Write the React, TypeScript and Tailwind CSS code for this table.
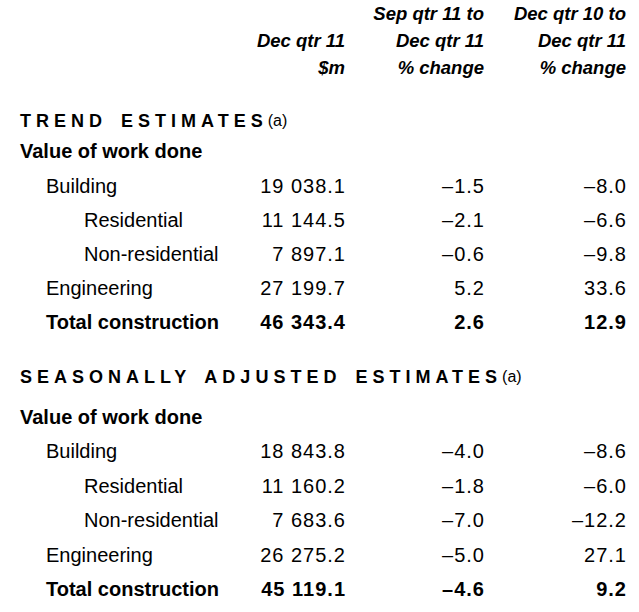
const font = { fontFamily: '"Liberation Sans", Arial, sans-serif' }

type Row = {
  label:  string
  indent: 0 | 1 | 2
  total?: boolean
  level:  string
  qtr:    string
  year:   string
}

const trend: Row[] = [
  { label: 'Building',           indent: 1, level: '19 038.1', qtr: '–1.5', year: '–8.0' },
  { label: 'Residential',        indent: 2, level: '11 144.5', qtr: '–2.1', year: '–6.6' },
  { label: 'Non-residential',    indent: 2, level: '7 897.1',  qtr: '–0.6', year: '–9.8' },
  { label: 'Engineering',        indent: 1, level: '27 199.7', qtr: '5.2',  year: '33.6' },
  { label: 'Total construction', indent: 1, total: true, level: '46 343.4', qtr: '2.6', year: '12.9' },
]

const seasonal: Row[] = [
  { label: 'Building',           indent: 1, level: '18 843.8', qtr: '–4.0', year: '–8.6' },
  { label: 'Residential',        indent: 2, level: '11 160.2', qtr: '–1.8', year: '–6.0' },
  { label: 'Non-residential',    indent: 2, level: '7 683.6',  qtr: '–7.0', year: '–12.2' },
  { label: 'Engineering',        indent: 1, level: '26 275.2', qtr: '–5.0', year: '27.1' },
  { label: 'Total construction', indent: 1, total: true, level: '45 119.1', qtr: '–4.6', year: '9.2' },
]

const cols = 'grid grid-cols-[220px_105px_139px_142px]'

function DataRow({ row, tall }: { row: Row; tall?: boolean }): React.JSX.Element {
  const pad = row.indent === 2 ? 'pl-[64px]' : 'pl-[26px]'
  const weight = row.total ? 'font-bold' : 'font-normal'
  return (
    <div className={`${cols} ${tall ? 'h-[34.5px]' : 'h-[34px]'} items-center text-[20px] leading-none text-black ${weight}`}>
      <div className={pad}>{row.label}</div>
      <div className="text-right tracking-[1px] -mr-[1px]">{row.level}</div>
      <div className="text-right tracking-[1px] -mr-[1px]">{row.qtr}</div>
      <div className="text-right tracking-[1px] -mr-[1px]">{row.year}</div>
    </div>
  )
}

function SectionHeading({ title }: { title: string }): React.JSX.Element {
  return (
    <div className="flex h-[30px] items-center text-black">
      <span className="text-[18px] font-bold tracking-[5px] [word-spacing:4px]">{title}</span>
      <span className="text-[16px] font-normal">(a)</span>
    </div>
  )
}

export default function App(): React.JSX.Element {
  return (
    <div style={font} className="h-[612px] w-[639px] bg-white pl-[20px] text-black">
      <div className={`${cols} text-[18.5px] font-bold italic leading-[27px]`}>
        <div />
        <div className="text-right">
          <div>&nbsp;</div>
          <div>Dec qtr 11</div>
          <div>$m</div>
        </div>
        <div className="text-right">
          <div>Sep qtr 11 to</div>
          <div>Dec qtr 11</div>
          <div>% change</div>
        </div>
        <div className="text-right">
          <div>Dec qtr 10 to</div>
          <div>Dec qtr 11</div>
          <div>% change</div>
        </div>
      </div>

      <div className="mt-[25px]">
        <SectionHeading title="TREND ESTIMATES" />
        <div className="flex h-[30px] items-center text-[20px] font-bold">Value of work done</div>
        <div className="mt-[3px]">
          {trend.map((r) => <DataRow key={r.label} row={r} />)}
        </div>
      </div>

      <div className="mt-[23px]">
        <SectionHeading title="SEASONALLY ADJUSTED ESTIMATES" />
        <div className="mt-[10px] flex h-[30px] items-center text-[20px] font-bold">Value of work done</div>
        <div className="mt-[2px]">
          {seasonal.map((r) => <DataRow key={r.label} row={r} tall />)}
        </div>
      </div>
    </div>
  )
}
